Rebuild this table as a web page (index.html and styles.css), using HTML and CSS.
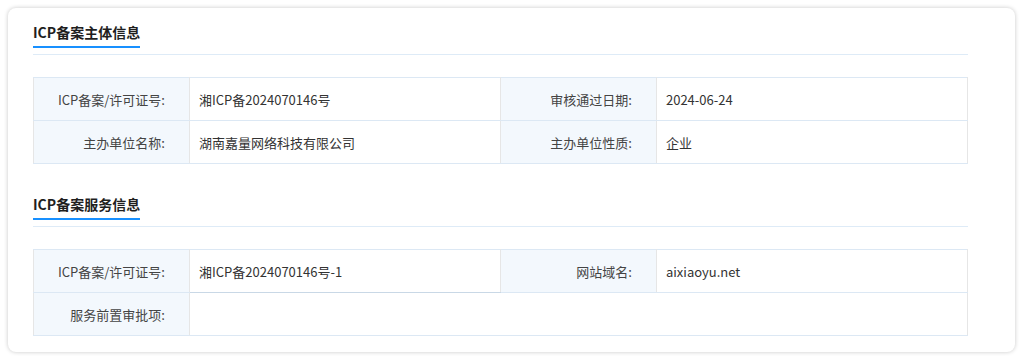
FILE: index.html
```html
<!DOCTYPE html>
<html lang="zh-CN">
<head>
<meta charset="utf-8">
<title>ICP备案信息</title>
<link rel="stylesheet" href="styles.css">
</head>
<body>
<div class="card">
  <section class="section">
    <div class="sec-head"><h2 class="sec-title">ICP备案主体信息</h2></div>
    <table class="info">
      <colgroup><col class="c-label"><col class="c-value"><col class="c-label"><col class="c-value"></colgroup>
      <tr>
        <td class="label">ICP备案/许可证号:</td>
        <td class="value">湘ICP备2024070146号</td>
        <td class="label">审核通过日期:</td>
        <td class="value">2024-06-24</td>
      </tr>
      <tr>
        <td class="label">主办单位名称:</td>
        <td class="value">湖南嘉量网络科技有限公司</td>
        <td class="label">主办单位性质:</td>
        <td class="value">企业</td>
      </tr>
    </table>
  </section>
  <section class="section second">
    <div class="sec-head"><h2 class="sec-title">ICP备案服务信息</h2></div>
    <table class="info">
      <colgroup><col class="c-label"><col class="c-value"><col class="c-label"><col class="c-value"></colgroup>
      <tr>
        <td class="label">ICP备案/许可证号:</td>
        <td class="value raised">湘ICP备2024070146号-1</td>
        <td class="label">网站域名:</td>
        <td class="value">aixiaoyu.net</td>
      </tr>
      <tr>
        <td class="label">服务前置审批项:</td>
        <td class="value" colspan="3"></td>
      </tr>
    </table>
  </section>
</div>
</body>
</html>
```

FILE: styles.css
```css
* { box-sizing: border-box; }
html, body {
  margin: 0;
  padding: 0;
  background: #ffffff;
}
body {
  font-family: "Noto Sans CJK SC", "Noto Sans", sans-serif;
  color: #333;
  padding: 8px 9px 8px 8px;
}
.card {
  width: 1007px;
  height: 344px;
  background: #fff;
  border-radius: 8px;
  box-shadow: 0 0 4px rgba(0, 0, 0, 0.22);
  padding: 11px 47px 16px 25px;
}
.sec-head {
  border-bottom: 1px solid #deebf7;
  padding-bottom: 6px;
}
.sec-title {
  display: inline-block;
  margin: 0;
  font-size: 14px;
  font-weight: 700;
  color: #1f1f1f;
  line-height: 22px;
  padding: 0 0 3px;
  border-bottom: 2px solid #1890ff;
}
.second {
  margin-top: 27px;
}
.info {
  width: 100%;
  margin-top: 22px;
  border-collapse: collapse;
  table-layout: fixed;
  border: 1px solid #e3e3e3;
  font-size: 13px;
}
.c-label { width: 16.7%; }
.c-value { width: 33.3%; }
.info tr { height: 43px; }
.info td {
  border-top: 1px solid #dce8f4;
  border-bottom: 1px solid #dce8f4;
  border-left: 1px solid #e6e6e6;
  border-right: 1px solid #e6e6e6;
  padding: 0 9px;
  vertical-align: middle;
  white-space: nowrap;
}
.info td.label {
  background: #f3f8fd;
  color: #444;
  text-align: right;
  padding-right: 24px;
}
.info td.value {
  background: #fff;
  color: #333;
}
.info td.raised {
  border-bottom: 1px solid #c9d8e6;
}
```
